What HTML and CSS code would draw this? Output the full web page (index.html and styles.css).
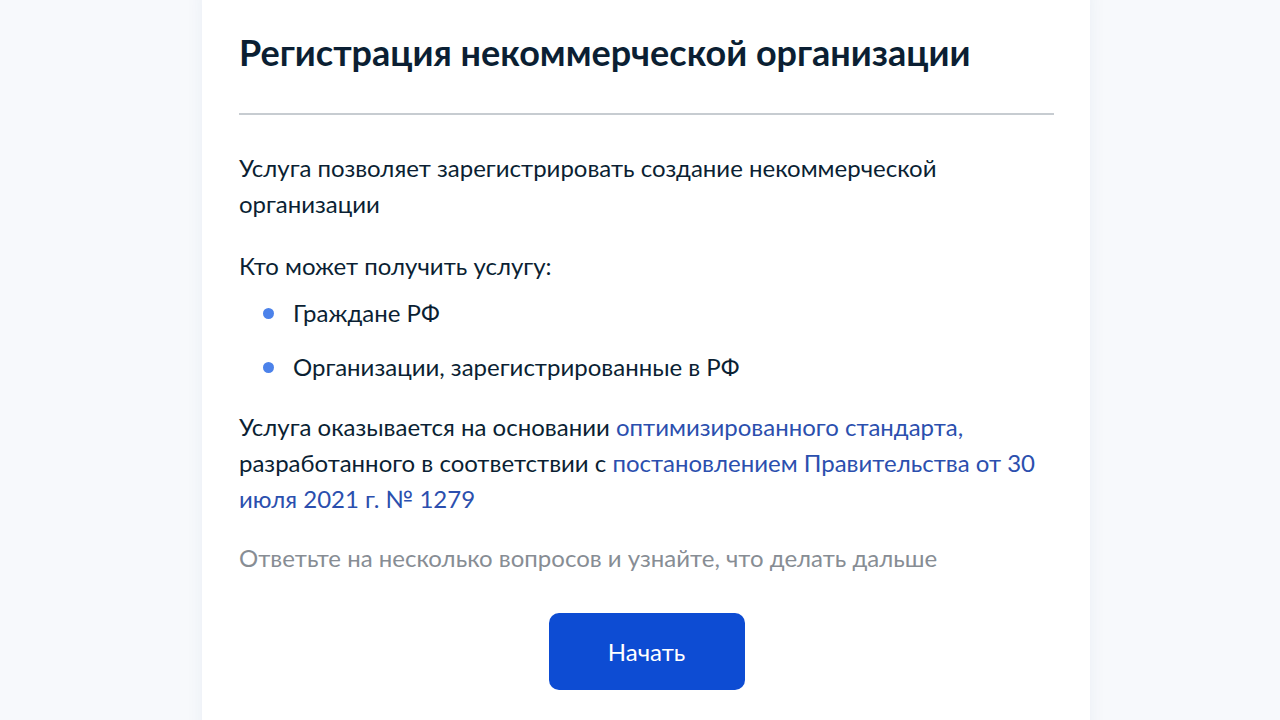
FILE: index.html
```html
<!DOCTYPE html>
<html lang="ru">
<head>
<meta charset="utf-8">
<link rel="stylesheet" href="styles.css">
</head>
<body>
<main class="page">
  <section class="card">
    <h1 class="title">Регистрация некоммерческой организации</h1>
    <hr class="divider">
    <p class="text intro">Услуга позволяет зарегистрировать создание некоммерческой организации</p>
    <p class="text who">Кто может получить услугу:</p>
    <ul class="list">
      <li>Граждане РФ</li>
      <li>Организации, зарегистрированные в РФ</li>
    </ul>
    <p class="text basis">Услуга оказывается на основании <a class="link" href="#">оптимизированного стандарта,</a> разработанного в соответствии с <a class="link" href="#">постановлением Правительства от 30 июля 2021 г. № 1279</a></p>
    <p class="text muted">Ответьте на несколько вопросов и узнайте, что делать дальше</p>
    <div class="actions">
      <button class="btn" type="button">Начать</button>
    </div>
  </section>
</main>
</body>
</html>
```
FILE: styles.css
```css
html, body {
  margin: 0;
  padding: 0;
  height: 100%;
  overflow: hidden;
}
body {
  background: #f7f9fc;
  font-family: Lato, "Noto Sans", sans-serif;
  color: #0b1f33;
}
.page {
  display: flex;
  justify-content: center;
  padding-left: 12px;
}
.card {
  width: 888px;
  box-sizing: border-box;
  background: #ffffff;
  border-radius: 24px;
  margin-top: -24px;
  padding: 54px 36px 40px 37px;
  box-shadow: 0 0 18px rgba(40, 70, 120, 0.06);
  min-height: 800px;
}
.title {
  margin: 0;
  font-size: 36px;
  line-height: 44px;
  font-weight: 700;
  color: #0b1f33;
}
.divider {
  border: 0;
  height: 2px;
  background: #c7ccd1;
  margin: 39px 0 35px;
}
.text {
  margin: 0 0 24px;
  font-size: 24px;
  line-height: 36px;
}
.intro {
  margin-bottom: 26px;
}
.who {
  margin-bottom: 11px;
}
.list {
  list-style: none;
  margin: 0 0 24px;
  padding: 0;
}
.list li {
  position: relative;
  padding-left: 54px;
  font-size: 24px;
  line-height: 36px;
  margin-bottom: 18px;
}
.list li:last-child {
  margin-bottom: 0;
}
.list li::before {
  content: "";
  position: absolute;
  left: 24px;
  top: 13px;
  width: 11px;
  height: 11px;
  border-radius: 50%;
  background: #4c82ea;
}
.basis {
  margin-bottom: 23px;
}
.link {
  color: #2b4fae;
  text-decoration: none;
}
.muted {
  color: #878d94;
  margin: 0;
}
.actions {
  display: flex;
  justify-content: center;
  padding-top: 37px;
}
.btn {
  width: 196px;
  height: 77px;
  border: 0;
  border-radius: 10px;
  background: #0d4cd3;
  color: #ffffff;
  font-family: Lato, "Noto Sans", sans-serif;
  font-size: 24px;
  cursor: pointer;
}
```
